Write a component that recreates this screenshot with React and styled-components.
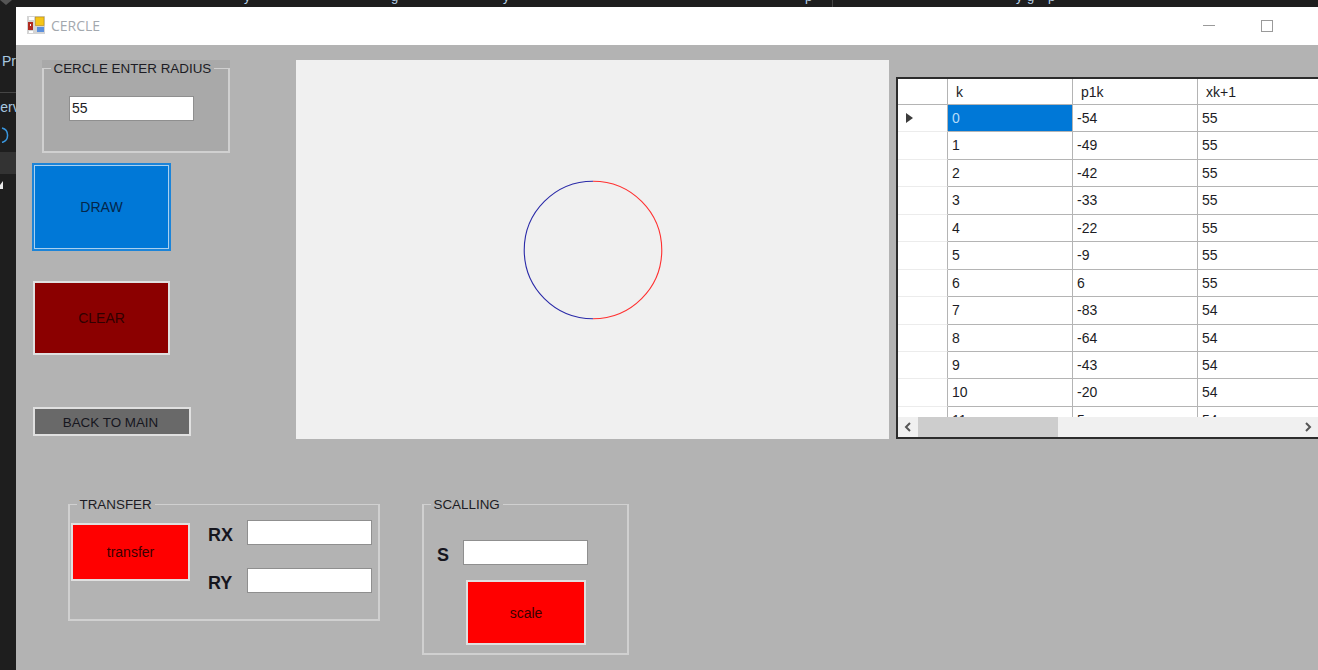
import React from 'react'
import styled, { createGlobalStyle } from 'styled-components'

const GlobalStyle = createGlobalStyle`
    html, body {
        margin: 0;
        height: 100%;
        overflow: hidden;
        background: #1e1e1e;
    }
`

const Screen = styled.div`
    display: flex;
    flex-direction: column;
    width: 1318px;
    height: 670px;
    overflow: hidden;
    font-family: 'Liberation Sans', Arial, sans-serif;
    font-size: 14px;
    color: #1c1c24;
`

const TopStrip = styled.div`
    flex: 0 0 7px;
    display: flex;
    overflow: hidden;
    background: #1e1e1e;
`

const StripChevron = styled.svg`
    flex: 0 0 12px;
    display: block;
`

const StripGlyph = styled.span`
    flex: 0 0 auto;
    width: 8px;
    height: 7px;
    margin-left: ${props => props.gap}px;
    margin-top: -3px;
    line-height: 0;
    font-size: 13px;
    color: #b9d4ea;
`

const StripRule = styled.div`
    flex: 0 0 1px;
    margin-left: ${props => props.gap}px;
    background: #454545;
`

const Columns = styled.div`
    flex: 1;
    display: flex;
    min-height: 0;
`

const IdeStrip = styled.div`
    flex: 0 0 16px;
    display: flex;
    flex-direction: column;
    overflow: hidden;
    background: #1e1e1e;
    color: #a8c8e0;
`

const IdeText = styled.div`
    height: 16px;
    line-height: 16px;
    white-space: nowrap;
    margin-top: ${props => props.top}px;
    margin-left: ${props => props.shift}px;
`

const IdeRule = styled.div`
    flex: 0 0 1px;
    margin-top: 23px;
    background: #454545;
`

const IdeBand = styled.div`
    flex: 0 0 22px;
    margin-top: 9px;
    background: #333333;
`

const Spinner = styled.svg`
    display: block;
    flex: 0 0 16px;
    margin-top: 12px;
    margin-left: -8px;
`

const Caret = styled.svg`
    display: block;
    flex: 0 0 8px;
    margin-top: 7px;
`

const Window = styled.div`
    flex: 1;
    display: flex;
    flex-direction: column;
    min-width: 0;
`

const TitleBar = styled.div`
    flex: 0 0 38px;
    box-sizing: border-box;
    display: flex;
    align-items: center;
    padding: 0 0 2px 11px;
    background: #ffffff;
    color: #a3a8ae;
`

const WindowTitle = styled.span`
    margin-left: 6px;
    font-family: 'Open Sans', sans-serif;
    font-size: 14px;
`

const Minimize = styled.div`
    width: 12px;
    height: 1px;
    margin-left: auto;
    background: #9a9a9a;
`

const Maximize = styled.div`
    width: 12px;
    height: 12px;
    margin: 2px 45px 0 46px;
    box-sizing: border-box;
    border: 1px solid #9a9a9a;
`

const Body = styled.div`
    flex: 1;
    display: flex;
    flex-direction: column;
    background: #b3b3b3;
`

const TopRow = styled.div`
    display: flex;
    align-items: flex-start;
    padding-top: 15px;
`

const LeftColumn = styled.div`
    flex: 0 0 280px;
    display: flex;
    flex-direction: column;
    align-items: flex-start;
`

const RadiusPanel = styled.div`
    width: 188px;
    height: 93px;
    margin-left: 26px;
    background: #a9a9a9;
`

const Frame = styled.fieldset`
    margin: ${props => props.offset || 0};
    padding: 0;
    min-width: 0;
    height: ${props => props.h}px;
    width: ${props => props.w}px;
    box-sizing: border-box;
    border: 2px solid #d0d0d0;
    border-top-width: 1.5px;
`

const Caption = styled.legend`
    margin-left: 6.5px;
    padding: 0 3px;
    height: 16px;
    line-height: 18px;
    font-size: 13.4px;
    white-space: nowrap;
`

const Input = styled.input`
    display: block;
    box-sizing: border-box;
    width: 125px;
    height: 25px;
    padding: 0 2px 1px;
    border: 1.5px solid #8f8f8f;
    border-radius: 0;
    outline: none;
    background: #ffffff;
    font: 14px 'Liberation Sans', Arial, sans-serif;
    color: #1c1c24;
    margin: ${props => props.offset || 0};
`

const Button = styled.button`
    display: flex;
    align-items: center;
    justify-content: center;
    box-sizing: border-box;
    padding: ${props => props.inset || 0};
    width: ${props => props.w}px;
    height: ${props => props.h}px;
    margin: ${props => props.offset || 0};
    border: 2px solid #e0e0e0;
    border-radius: 0;
    background: ${props => props.fill};
    color: ${props => props.ink || '#000000'};
    font: ${props => props.size || 14}px 'Liberation Sans', Arial, sans-serif;
`

const DrawButton = styled(Button)`
    border: 2px solid #1c84d8;
    box-shadow: inset 0 0 0 1px #a9d0ef;
`

const Canvas = styled.div`
    flex: 0 0 593px;
    height: 379px;
    display: flex;
    align-items: center;
    justify-content: center;
    background: #f0f0f0;
`

const Grid = styled.div`
    flex: 1;
    min-width: 0;
    height: 362px;
    margin: 17px 0 0 7px;
    box-sizing: border-box;
    display: flex;
    flex-direction: column;
    border: 2px solid #2c2c2c;
    border-right: none;
    background: #ffffff;
`

const GridViewport = styled.div`
    height: 338px;
    overflow: hidden;
`

const GridRow = styled.div`
    display: grid;
    grid-template-columns: 50px repeat(3, 125px);
    height: ${props => props.h}px;
    line-height: ${props => props.h + 0.5}px;
`

const RowHead = styled.div`
    display: flex;
    align-items: center;
    padding-left: 8px;
    border-bottom: 1px solid ${props => (props.header ? '#b4b4b4' : '#ececec')};
    border-right: 1px solid #b4b4b4;
`

const Cell = styled.div`
    padding-left: ${props => (props.header ? 8 : 4)}px;
    overflow: hidden;
    border-bottom: 1px solid #b4b4b4;
    border-right: 1px solid #b4b4b4;
    background: ${props => (props.selected ? '#0078d7' : 'transparent')};
    color: ${props => (props.selected ? '#b5dcf8' : 'inherit')};
`

const ScrollBar = styled.div`
    flex: 1;
    display: flex;
    align-items: center;
    background: #f0f0f0;
`

const ScrollArrow = styled.svg`
    flex: 0 0 20px;
    display: block;
`

const ScrollThumb = styled.div`
    width: 140px;
    height: 20px;
    background: #cdcdcd;
`

const ScrollRest = styled.div`
    flex: 1;
`

const BottomRow = styled.div`
    display: flex;
    align-items: flex-start;
    margin-top: 57px;
`

const FieldGrid = styled.div`
    display: grid;
    grid-template-columns: ${props => props.columns};
    row-gap: 23px;
    align-items: center;
    padding: ${props => props.pad};
`

const TransferBody = styled.div`
    display: flex;
    align-items: flex-start;
`

const FieldLabel = styled.label`
    margin-top: 5px;
    line-height: 20px;
    font-size: 18px;
    font-weight: bold;
    color: #16161e;
`

const rows = [
    [0, -54, 55],
    [1, -49, 55],
    [2, -42, 55],
    [3, -33, 55],
    [4, -22, 55],
    [5, -9, 55],
    [6, 6, 55],
    [7, -83, 54],
    [8, -64, 54],
    [9, -43, 54],
    [10, -20, 54],
    [11, 5, 54],
]

const AppIcon = () => (
    <svg width="18" height="18" viewBox="0 0 18 18">
        <rect width="18" height="18" fill="#d4d4d4" />
        <rect x="2" y="1" width="5" height="3" fill="#ffffff" />
        <rect x="8.5" y="1" width="8.5" height="8.5" fill="#f5c518" stroke="#b98a10" strokeWidth="0.6" />
        <rect x="1" y="6" width="5" height="8" fill="#b02a20" />
        <rect x="3" y="8" width="1" height="2" fill="#ffffff" />
        <rect x="10" y="11" width="7" height="5" fill="#5b8fdc" />
        <rect x="2" y="15" width="4" height="2" fill="#ffffff" />
    </svg>
)

const CircleDrawing = () => (
    <svg width="140" height="140" viewBox="0 0 140 140">
        <path d="M70 1.2 A68.8 68.8 0 0 0 70 138.8" fill="none" stroke="#2a2aa8" strokeWidth="1.1" />
        <path d="M70 1.2 A68.8 68.8 0 0 1 70 138.8" fill="none" stroke="#ff3030" strokeWidth="1.1" />
    </svg>
)

const Arrow = ({ flip }) => (
    <ScrollArrow width="20" height="20" viewBox="0 0 20 20">
        <path
            d={flip ? 'M8 6 L12 10 L8 14' : 'M12 6 L8 10 L12 14'}
            fill="none"
            stroke="#555555"
            strokeWidth="2"
        />
    </ScrollArrow>
)

const App = () => (
    <Screen>
        <GlobalStyle />
        <TopStrip>
            <StripChevron width="12" height="7" viewBox="0 0 12 7">
                <path d="M0 0 H12 L6 5 Z" fill="#555555" />
            </StripChevron>
            <StripGlyph gap={232}>y</StripGlyph>
            <StripGlyph gap={139}>g</StripGlyph>
            <StripGlyph gap={104}>y</StripGlyph>
            <StripGlyph gap={294}>p</StripGlyph>
            <StripRule gap={19} />
            <StripGlyph gap={183}>y</StripGlyph>
            <StripGlyph gap={3}>g</StripGlyph>
            <StripGlyph gap={13}>p</StripGlyph>
        </TopStrip>
        <Columns>
            <IdeStrip>
                <IdeText top={46} shift={2}>Pr</IdeText>
                <IdeRule />
                <IdeText top={6} shift={-9}>Serv</IdeText>
                <Spinner width="24" height="16" viewBox="0 0 24 16">
                    <path d="M10 1 A7.5 7.5 0 0 1 10 15.5" fill="none" stroke="#3a96dd" strokeWidth="1.5" />
                </Spinner>
                <IdeBand />
                <Caret width="4" height="8" viewBox="0 0 4 8">
                    <path d="M0 8 V4 L3 0 V8 Z" fill="#e8e8e8" />
                </Caret>
            </IdeStrip>
            <Window>
                <TitleBar>
                    <AppIcon />
                    <WindowTitle>CERCLE</WindowTitle>
                    <Minimize />
                    <Maximize />
                </TitleBar>
                <Body>
                    <TopRow>
                        <LeftColumn>
                            <RadiusPanel>
                                <Frame w={188} h={93}>
                                    <Caption>CERCLE ENTER RADIUS</Caption>
                                    <Input defaultValue="55" offset="20px 0 0 25px" />
                                </Frame>
                            </RadiusPanel>
                            <DrawButton w={139} h={88} fill="#0078d7" ink="#04264a" offset="10px 0 0 16px">
                                DRAW
                            </DrawButton>
                            <Button w={137} h={74} fill="#8b0000" ink="#300000" offset="30px 0 0 17px">
                                CLEAR
                            </Button>
                            <Button
                                w={158}
                                h={29}
                                fill="#696969"
                                ink="#16161e"
                                size={13.4}
                                inset="2px 3px 0 0"
                                offset="52px 0 0 17px"
                            >
                                BACK TO MAIN
                            </Button>
                        </LeftColumn>
                        <Canvas>
                            <CircleDrawing />
                        </Canvas>
                        <Grid>
                            <GridViewport>
                                <GridRow h={26}>
                                    <RowHead header />
                                    <Cell header>k</Cell>
                                    <Cell header>p1k</Cell>
                                    <Cell header>xk+1</Cell>
                                </GridRow>
                                {rows.map((row, i) => (
                                    <GridRow h={27.45} key={row[0]}>
                                        <RowHead>
                                            {i === 0 && (
                                                <svg width="8" height="12" viewBox="0 0 8 12">
                                                    <path d="M0 1 L7 6 L0 11 Z" fill="#3c3c3c" />
                                                </svg>
                                            )}
                                        </RowHead>
                                        <Cell selected={i === 0}>{row[0]}</Cell>
                                        <Cell>{row[1]}</Cell>
                                        <Cell>{row[2]}</Cell>
                                    </GridRow>
                                ))}
                            </GridViewport>
                            <ScrollBar>
                                <Arrow />
                                <ScrollThumb />
                                <ScrollRest />
                                <Arrow flip />
                            </ScrollBar>
                        </Grid>
                    </TopRow>
                    <BottomRow>
                        <Frame w={312} h={125} offset="0 0 0 52px">
                            <Caption>TRANSFER</Caption>
                            <TransferBody>
                                <Button w={119} h={58} fill="#ff0000" ink="#3a0000" offset="11px 0 0 1px">
                                    transfer
                                </Button>
                                <FieldGrid columns="39px 125px" pad="8px 0 0 18px">
                                    <FieldLabel>RX</FieldLabel>
                                    <Input />
                                    <FieldLabel>RY</FieldLabel>
                                    <Input />
                                </FieldGrid>
                            </TransferBody>
                        </Frame>
                        <Frame w={207} h={159} offset="0 0 0 42px">
                            <Caption>SCALLING</Caption>
                            <FieldGrid columns="26px 125px" pad="28px 0 0 13px">
                                <FieldLabel>S</FieldLabel>
                                <Input />
                            </FieldGrid>
                            <Button w={120} h={65} fill="#ff0000" ink="#3a0000" offset="15px 0 0 42px">
                                scale
                            </Button>
                        </Frame>
                    </BottomRow>
                </Body>
            </Window>
        </Columns>
    </Screen>
)

export default App
